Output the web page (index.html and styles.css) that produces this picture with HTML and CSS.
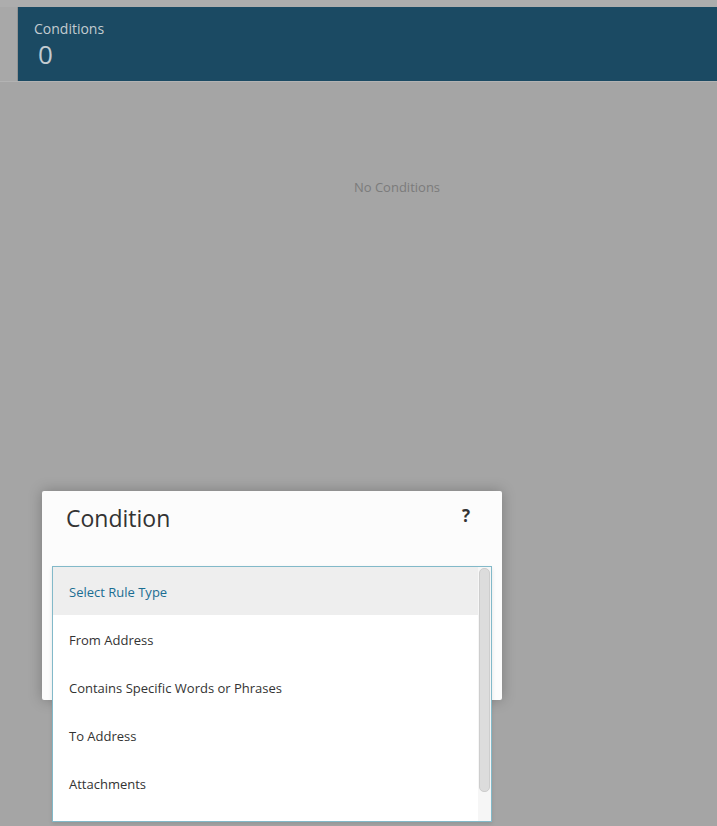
FILE: index.html
```html
<!DOCTYPE html>
<html lang="en">
<head>
  <meta charset="UTF-8">
  <meta name="viewport" content="width=device-width, initial-scale=1.0">
  <title>Conditions</title>
  <link rel="stylesheet" href="styles.css">
</head>
<body>
  <div class="top-strip"></div>
  <header class="header">
    <div class="header-side"></div>
    <div class="header-main">
      <div class="header-label">Conditions</div>
      <div class="header-count">0</div>
    </div>
  </header>

  <main class="main-content">
    <p class="empty">No Conditions</p>
  </main>

  <!-- dialog -->
  <div class="modal">
    <div class="modal-head">
      <h2>Condition</h2>
      <span class="help">?</span>
    </div>

    <div class="dropdown">
      <ul class="options">
        <li class="selected">Select Rule Type</li>
        <li>From Address</li>
        <li>Contains Specific Words or Phrases</li>
        <li>To Address</li>
        <li>Attachments</li>
      </ul>
      <div class="scroll-track"><div class="scroll-thumb"></div></div>
    </div>
  </div>
</body>
</html>
```

FILE: styles.css
```css
body {
  font-family: 'Open Sans', 'Noto Sans', sans-serif;
  margin: 0;
  padding: 0;
  background-color: #a5a5a5;
  height: 826px;
  overflow: hidden;
  position: relative;
}
.top-strip {
  height: 7px;
  background-color: #adadad;
}
.header {
  display: flex;
  height: 74px;
  border-bottom: 1px solid #b3b3b3;
}
.header-side {
  width: 17px;
  background-color: #a8a8a8;
  border-right: 1px solid #939393;
}
.header-main {
  flex: 1;
  background-color: #1b4a63;
  padding: 12px 16px;
}
.header-label {
  color: #c3ccd1;
  font-size: 14px;
  line-height: 20px;
}
.header-count {
  color: #c3ccd1;
  font-size: 26px;
  line-height: 30px;
  padding-left: 4px;
}
.main-content {
  padding-top: 96px;
  padding-left: 77px;
}
.empty {
  margin: 0;
  text-align: center;
  color: #7b7b7b;
  font-size: 13px;
  line-height: 18px;
}
.modal {
  position: absolute;
  left: 42px;
  top: 491px;
  width: 460px;
  height: 209px;
  background-color: #fcfcfc;
  border-radius: 2px;
  box-shadow: 0 0 14px rgba(0,0,0,0.25);
}
.modal-head {
  display: flex;
  justify-content: space-between;
  align-items: center;
  padding: 11px 32px 0 24px;
}
.modal-head h2 {
  margin: 0;
  font-weight: normal;
  font-size: 23px;
  line-height: 32px;
  color: #333;
}
.help {
  font-size: 17px;
  font-weight: bold;
  color: #333;
  margin-top: -6px;
}
.dropdown {
  position: absolute;
  left: 10px;
  top: 75px;
  width: 438px;
  height: 254px;
  border: 1px solid #82b9c9;
  background: white;
  overflow: hidden;
  box-shadow: 0 2px 4px rgba(0,0,0,0.1);
}
.options {
  list-style: none;
  margin: 0;
  padding: 0;
  margin-right: 13px;
}
.options li {
  height: 48px;
  line-height: 50px;
  padding-left: 16px;
  font-size: 13px;
  color: #333;
}
.options li.selected {
  background-color: #eeeeee;
  color: #1a6d92;
}
.scroll-track {
  position: absolute;
  top: 0;
  right: 0;
  width: 13px;
  height: 100%;
  background-color: #f6f6f6;
}
.scroll-thumb {
  margin: 1px 1px 0 1px;
  height: 222px;
  background-color: #dcdcdc;
  border: 1px solid #cdcdcd;
  border-radius: 5px;
}
```
